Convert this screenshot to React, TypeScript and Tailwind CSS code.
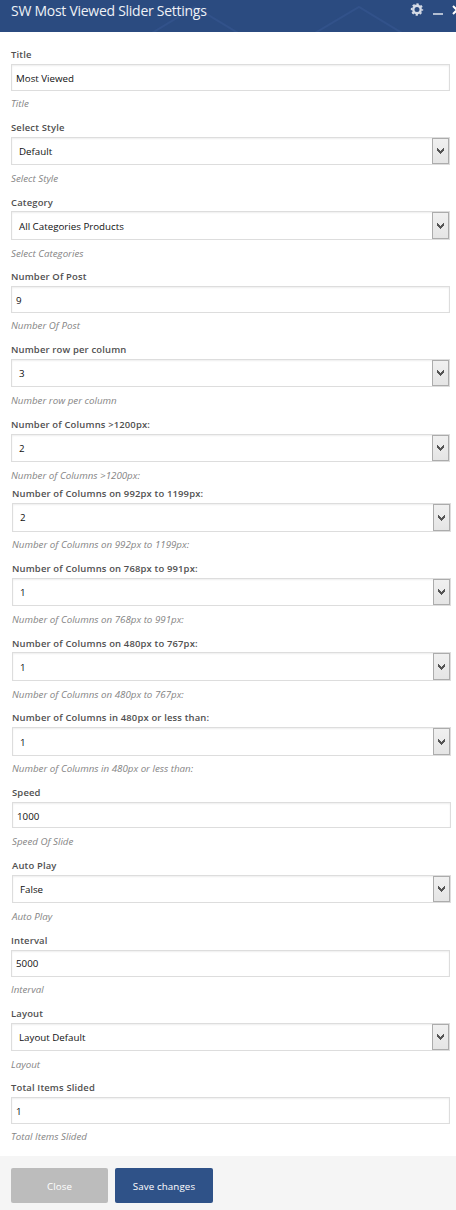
import { useState } from "react";

type Field = {
    label: string;
    hint: string;
    value: string;
    select?: boolean;
    row: string;
    box: string;
    labelLine?: string;
    valuePad?: string;
    hintLine?: string;
};

const fields: Field[] = [
    { label: "Title", hint: "Title", value: "Most Viewed", row: "h-[73px] pl-[11px] pr-1.5", box: "h-[27px]", valuePad: "pt-[3px]" },
    { label: "Select Style", hint: "Select Style", value: "Default", select: true, row: "h-[74px] pl-[11px] pr-1.5", box: "h-7" },
    { label: "Category", hint: "Select Categories", value: "All Categories Products", select: true, row: "h-[75px] pl-[11px] pr-1.5", box: "h-[29px]", labelLine: "leading-[24px]" },
    { label: "Number Of Post", hint: "Number Of Post", value: "9", row: "h-[73px] pl-[11px] pr-1.5", box: "h-[27px]", valuePad: "pt-[3px]" },
    { label: "Number row per column", hint: "Number row per column", value: "3", select: true, row: "h-[75px] pl-[11px] pr-1.5", box: "h-7" },
    { label: "Number of Columns >1200px:", hint: "Number of Columns >1200px:", value: "2", select: true, row: "h-[69px] pl-[11px] pr-1.5", box: "h-7" },
    { label: "Number of Columns on 992px to 1199px:", hint: "Number of Columns on 992px to 1199px:", value: "2", select: true, row: "h-[75px] pl-3 pr-[5px]", box: "h-[29px]", valuePad: "pt-px", hintLine: "leading-[26px]" },
    { label: "Number of Columns on 768px to 991px:", hint: "Number of Columns on 768px to 991px:", value: "1", select: true, row: "h-[74px] pl-3 pr-[5px]", box: "h-7" },
    { label: "Number of Columns on 480px to 767px:", hint: "Number of Columns on 480px to 767px:", value: "1", select: true, row: "h-[75px] pl-3 pr-[5px]", box: "h-[29px]", labelLine: "leading-[24px]" },
    { label: "Number of Columns in 480px or less than:", hint: "Number of Columns in 480px or less than:", value: "1", select: true, row: "h-[75px] pl-3 pr-[5px]", box: "h-[29px]", hintLine: "leading-[26px]" },
    { label: "Speed", hint: "Speed Of Slide", value: "1000", row: "h-[73px] pl-3 pr-[5px]", box: "h-[26px]", valuePad: "pt-[5px]", hintLine: "leading-[28px]" },
    { label: "Auto Play", hint: "Auto Play", value: "False", select: true, row: "h-[75px] pl-3 pr-[5px]", box: "h-7" },
    { label: "Interval", hint: "Interval", value: "5000", row: "h-[73px] pl-[11px] pr-1.5", box: "h-[27px]" },
    { label: "Layout", hint: "Layout", value: "Layout Default", select: true, row: "h-[74px] pl-[11px] pr-1.5", box: "h-7" },
    { label: "Total Items Slided", hint: "Total Items Slided", value: "1", row: "h-[79px] pl-[11px] pr-1.5", box: "h-[27px]", valuePad: "pt-[3px]" },
];

function FieldRow({ field }: { field: Field }) {
    const [value, setValue] = useState(field.value);
    const labelLine = field.labelLine ?? "leading-[22px]";
    const valuePad = field.valuePad ?? (field.select ? "pt-[3px]" : "pt-px");
    const hintLine = field.hintLine ?? (field.select ? "leading-[28px]" : "leading-[26px]");

    return (
        <div className={`flex flex-col ${field.row}`}>
            <label className={`h-5 shrink-0 text-[9.45px] font-semibold tracking-[0.16px] text-[#505050] ${labelLine}`}>{field.label}</label>
            <div className={`flex shrink-0 border border-[#dddddd] bg-white shadow-[inset_0_1px_2px_rgba(0,0,0,0.07)] ${field.box}`}>
                {field.select ? (
                    <>
                        <div className={`flex flex-1 items-center pl-[7px] text-[9.75px] text-[#111] ${valuePad}`}>{value}</div>
                        <button className="flex w-[17px] items-center justify-center border border-[#acacac] bg-linear-to-b from-[#f0f0f0] to-[#e5e5e5]">
                            <svg width="7" height="6" viewBox="0 0 7 6" fill="#555" shapeRendering="crispEdges">
                                <path d="M0 0h1v1h1v1h1v1h1v-1h1v-1h1v-1h1v3h-1v1h-1v1h-1v1h-1v-1h-1v-1h-1v-1h-1z" />
                            </svg>
                        </button>
                    </>
                ) : (
                    <input
                        className={`min-w-0 flex-1 bg-transparent pl-1 text-[9.75px] text-[#111] outline-none ${valuePad}`}
                        value={value}
                        onChange={(e) => setValue(e.target.value)}
                    />
                )}
            </div>
            <div className={`h-0 text-[9.75px] text-[#858585] italic ${hintLine}`}>{field.hint}</div>
        </div>
    );
}

export default function App() {
    return (
        <div className="h-[1210px] w-[456px] overflow-hidden bg-white font-['Open_Sans',sans-serif]">
            <header className="relative flex h-8 justify-between overflow-hidden bg-[#2b4b80]">
                <svg className="absolute top-0 left-0" width="456" height="32" fill="none" stroke="#32528a" strokeWidth="2">
                    <path d="M152 33L195 7L238 33M315 33L359 7L402 33" />
                </svg>
                <h1 className="relative pl-[11px] text-[14px] leading-[22px] tracking-[-0.27px] text-[#eef1f6]">SW Most Viewed Slider Settings</h1>
                <div className="relative h-8 w-[46px]">
                    <svg width="46" height="32" viewBox="0 0 46 32" fill="none" stroke="#d5dbe6">
                        <circle cx="7" cy="9.5" r="3.7" strokeWidth="2.4" />
                        <circle cx="7" cy="9.5" r="5.3" strokeWidth="1.8" strokeDasharray="2.3 1.862" strokeDashoffset="1.15" />
                        <path d="M23 14H33" strokeWidth="1.6" />
                        <path d="M43 6L51 14M51 6L43 14" strokeWidth="2" stroke="#fff" />
                    </svg>
                </div>
            </header>
            <main className="pt-3">
                {fields.map((field) => (
                    <FieldRow key={field.label} field={field} />
                ))}
            </main>
            <footer className="flex h-[54px] gap-[7px] bg-[#f5f5f5] pt-3 pl-[11px] text-[9.75px] tracking-[0.1px] text-white">
                <button className="h-[35px] w-[97px] rounded-xs bg-[#bcbcbc] pt-1">Close</button>
                <button className="h-[35px] w-[98px] rounded-xs bg-[#2f5288] pt-1">Save changes</button>
            </footer>
        </div>
    );
}
